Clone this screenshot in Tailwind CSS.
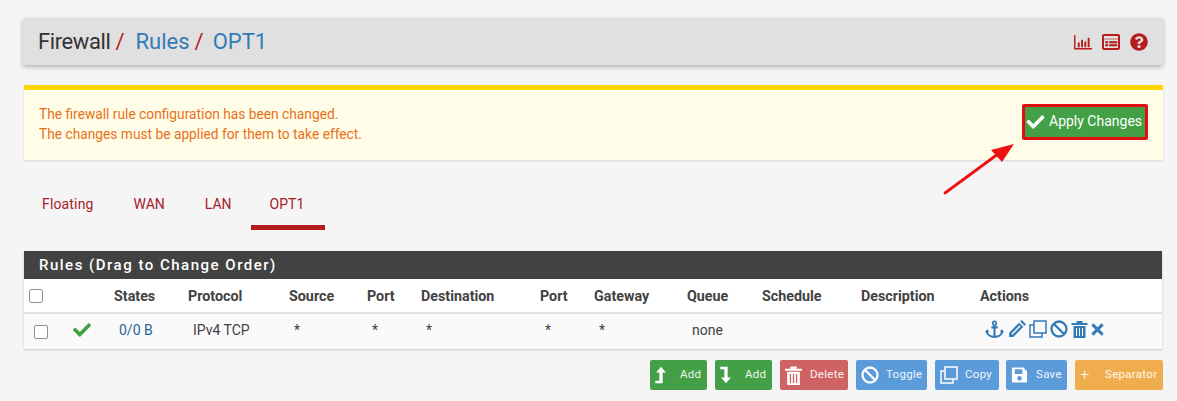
<!doctype html>
<html><head><meta charset="utf-8"><script src="https://cdn.jsdelivr.net/npm/@tailwindcss/browser@4"></script></head>
<body class="relative m-0 h-[401px] w-[1177px] overflow-hidden bg-[#f5f5f5] font-['Roboto',sans-serif] text-[#424242]">
<div class="flex flex-col pl-[24px] pr-[14px] pt-[18px]">
  <header class="-ml-[1px] flex h-[47px] items-center justify-between rounded-[2px] bg-[#e0e0e0] pl-[15px] pr-[15px] shadow-[0_2px_5px_rgba(0,0,0,0.28)]">
    <h1 class="flex items-center text-[22px] leading-none text-[#333]">
      <span class="tracking-[-0.4px]">Firewall</span><span class="ml-[5px] text-[#b71c1c]">/</span>
      <span class="ml-[11px] text-[#337ab7]">Rules</span><span class="ml-[5px] text-[#b71c1c]">/</span>
      <span class="ml-[9px] text-[#337ab7]">OPT1</span>
    </h1>
    <div class="flex items-center gap-[10px] text-[#b71c1c]">
      <svg viewBox="0 0 19 17" class="h-[16px] w-[18px]" fill="currentColor"><path d="M0 1h1.500v14H19v1.500H0zM4 9h2v5H4zM7.500 6h2v8h-2zM11 8h2v6h-2zM14.500 4h2v10h-2z"/></svg>
      <svg viewBox="0 0 18 16" class="h-[16px] w-[18px]"><rect x="1" y="1" width="16" height="14" rx="1" fill="none" stroke="currentColor" stroke-width="2"/><path d="M1 5h16M3.500 7.500h2.500v1.500H3.500zM7.500 7.500H15v1.500H7.500zM3.500 10.500h2.500V12H3.500zM7.500 10.500H15V12H7.500z" fill="currentColor" stroke="currentColor" stroke-width=".6"/></svg>
      <svg viewBox="0 0 512 512" class="h-[18px] w-[18px]" fill="currentColor"><path d="M504 256c0 136.997-111.043 248-248 248S8 392.997 8 256C8 119.083 119.043 8 256 8s248 111.083 248 248zM262.655 90c-54.497 0-89.255 22.957-116.549 63.758-3.536 5.286-2.353 12.415 2.715 16.258l34.699 26.31c5.205 3.947 12.621 3.008 16.665-2.122 17.864-22.658 30.113-35.797 57.303-35.797 20.429 0 45.698 13.148 45.698 32.958 0 14.976-12.363 22.667-32.534 33.976C247.128 238.528 216 254.941 216 296v4c0 6.627 5.373 12 12 12h56c6.627 0 12-5.373 12-12v-1.333c0-28.462 83.186-29.647 83.186-106.667 0-58.002-60.165-102-116.531-102zM256 338c-25.365 0-46 20.635-46 46 0 25.364 20.635 46 46 46s46-20.636 46-46c0-25.365-20.635-46-46-46z"/></svg>
    </div>
  </header>

  <section class="mt-[20px] flex h-[75px] items-center justify-between border-t-[5px] border-[#ffd600] bg-[#fffde7] pl-[15px] pr-[15px] shadow-[0_1px_2px_rgba(0,0,0,0.12)]">
    <p class="mb-[3px] text-[13.75px] leading-[20px] text-[#e8701a]">The firewall rule configuration has been changed.<br>The changes must be applied for them to take effect.</p>
    <button class="mb-[7px] flex h-[36px] w-[126px] items-center rounded-[2px] border-[3px] border-[#df0f0f] bg-[#43a047] pl-[1px] text-[14px] text-white">
      <svg viewBox="0 0 512 512" class="mr-[4px] h-[18px] w-[19px]" fill="currentColor"><path d="M173.898 439.404l-166.4-166.4c-9.997-9.997-9.997-26.206 0-36.204l36.203-36.204c9.997-9.998 26.207-9.998 36.204 0L192 312.69 432.095 72.596c9.997-9.997 26.207-9.997 36.204 0l36.203 36.204c9.997 9.997 9.997 26.206 0 36.204l-294.4 294.401c-9.998 9.997-26.207 9.997-36.204-.001z"/></svg>
      Apply Changes
    </button>
  </section>

  <nav class="mt-[24px] flex h-[46px] text-[14px] text-[#a3212a]">
    <a class="-ml-[2px] h-full px-[20px] pt-[10px] tracking-[0.15px]">Floating</a>
    <a class="h-full px-[20px] pt-[10px]">WAN</a>
    <a class="h-full px-[20px] pt-[10px]">LAN</a>
    <a class="-ml-[1px] h-full border-b-[5px] border-[#b71c1c] pl-[19px] pr-[21px] pt-[10px]">OPT1</a>
  </nav>

  <section class="mr-[1px] mt-[21px] bg-white shadow-[0_1px_2px_rgba(0,0,0,0.2)]">
    <h2 class="flex h-[28px] items-center bg-[#424242] pl-[15px] text-[15px] font-medium tracking-[1.5px] text-white">Rules (Drag to Change Order)</h2>
    <div class="grid h-[35px] grid-cols-[44px_41px_74px_101px_78px_54px_119px_54px_93px_75px_99px_119px_1fr] items-center border-b-[2px] border-[#e0e0e0] pl-[5px] pt-[2px] text-[14.3px] font-bold text-[#424242]">
      <span class="-mt-[2px] h-[14px] w-[14px] rounded-[2px] border border-[#8f8f8f] bg-white"></span><span></span>
      <span>States</span><span>Protocol</span><span>Source</span><span>Port</span><span>Destination</span><span>Port</span><span>Gateway</span><span>Queue</span><span>Schedule</span><span>Description</span><span>Actions</span>
    </div>
    <div class="grid h-[35px] grid-cols-[44px_41px_74px_101px_78px_54px_119px_54px_93px_75px_99px_119px_1fr] items-center bg-[#fafafa] pb-[2px] pl-[5px] text-[14px] text-[#424242]">
      <span class="ml-[5px] mt-[2px] h-[14px] w-[14px] rounded-[2px] border border-[#8f8f8f] bg-white"></span>
      <svg viewBox="0 0 512 512" class="-mt-[2px] h-[18px] w-[18px] text-[#43a047]" fill="currentColor"><path d="M173.898 439.404l-166.4-166.4c-9.997-9.997-9.997-26.206 0-36.204l36.203-36.204c9.997-9.998 26.207-9.998 36.204 0L192 312.69 432.095 72.596c9.997-9.997 26.207-9.997 36.204 0l36.203 36.204c9.997 9.997 9.997 26.206 0 36.204l-294.4 294.401c-9.998 9.997-26.207 9.997-36.204-.001z"/></svg>
      <span class="pl-[5px] text-[#2a6496]">0/0 B</span><span class="pl-[5px]">IPv4 TCP</span><span class="pl-[5px]">*</span><span class="pl-[5px]">*</span><span class="pl-[5px]">*</span><span class="pl-[5px]">*</span><span class="pl-[5px]">*</span><span class="pl-[5px]">none</span><span></span><span></span>
      <div class="-mt-[3px] ml-[5px] flex items-center gap-[3px] text-[#337ab7]">
        <svg viewBox="0 0 18 18" class="h-[19px] w-[19px]" fill="none" stroke="currentColor"><circle cx="9" cy="3" r="1.700" stroke-width="1.500"/><path d="M9 5v11M6 7h6" stroke-width="2"/><path d="M1.500 10.500c.5 3.500 4 5.500 7.500 5.500s7-2 7.500-5.500" stroke-width="2"/><path d="M0 11.500l2-3 2 3zM14 11.500l2-3 2 3z" fill="currentColor" stroke="none"/></svg>
        <svg viewBox="0 0 18 18" class="h-[19px] w-[19px]" fill="currentColor"><path d="M11.500 2.500l4 4L6 16H2v-4zM13 1l1-1 4 4-1 1-.5.500-4-4z"/><path d="M4 13l1 1 8-8-1-1z" fill="#fafafa"/></svg>
        <svg viewBox="0 0 18 18" class="h-[18px] w-[18px]" fill="none" stroke="currentColor" stroke-width="1.500"><rect x="5" y="1" width="12" height="12"/><path d="M5 5H1v12h12v-4"/></svg>
        <svg viewBox="0 0 18 18" class="h-[18px] w-[18px]" fill="none" stroke="currentColor" stroke-width="2.300"><circle cx="9" cy="9" r="7.500"/><path d="M3.700 3.700l10.600 10.600"/></svg>
        <svg viewBox="0 0 16 18" class="h-[18px] w-[17px]" fill="currentColor"><path d="M0 3h16v2H0zM5 1h6v2H5zM2 6h12v12H2z"/><path d="M4.500 8h1v8h-1zM7.500 8h1v8h-1zM10.500 8h1v8h-1z" fill="#fafafa"/></svg>
        <svg viewBox="0 0 14 14" class="h-[13px] w-[13px]" fill="none" stroke="currentColor" stroke-width="3.200"><path d="M1.500 1.500l11 11M12.500 1.500l-11 11"/></svg>
      </div>
    </div>
  </section>

  <div class="mt-[11px] flex justify-end gap-[8px] text-[11.5px] tracking-[0.3px] text-white/90">
    <a class="flex h-[30px] w-[57px] items-center rounded-[2px] bg-[#43a047] pl-[4px]">
      <svg viewBox="0 0 16 22" class="h-[18px] w-[14px] text-white" fill="currentColor"><path d="M8 1l6 7h-4v13H1v-3h5V8H2z"/></svg><span class="ml-[12px]">Add</span></a>
    <a class="flex h-[30px] w-[57px] items-center rounded-[2px] bg-[#43a047] pl-[4px]">
      <svg viewBox="0 0 16 22" class="h-[18px] w-[14px] text-white" fill="currentColor"><path d="M1 1h9v13h4l-6 7-6-7h4V4H1z"/></svg><span class="ml-[12px]">Add</span></a>
    <a class="flex h-[30px] w-[68px] items-center rounded-[2px] bg-[#cf6262] pl-[5px]">
      <svg viewBox="0 0 16 18" class="h-[19px] w-[17px] text-white" fill="currentColor"><path d="M0 2.500h16v2H0zM5 .5h6v2H5zM2 5.500h12V18H2z"/><path d="M4.500 7.500h1.200v8.500H4.500zM7.400 7.500h1.200v8.500H7.400zM10.300 7.500h1.200v8.500h-1.200z" fill="#cf6262"/></svg><span class="ml-[8px]">Delete</span></a>
    <a class="flex h-[30px] w-[71px] items-center rounded-[2px] bg-[#5b9bd9] pl-[5px]">
      <svg viewBox="0 0 18 18" class="h-[18px] w-[18px] text-white" fill="none" stroke="currentColor" stroke-width="2.300"><circle cx="9" cy="9" r="7.500"/><path d="M3.700 3.700l10.600 10.600"/></svg><span class="ml-[7px]">Toggle</span></a>
    <a class="flex h-[30px] w-[64px] items-center rounded-[2px] bg-[#5b9bd9] pl-[5px]">
      <svg viewBox="0 0 18 18" class="h-[18px] w-[18px] text-white" fill="none" stroke="currentColor" stroke-width="1.500"><rect x="5" y="1" width="12" height="12"/><path d="M5 5H1v12h12v-4"/></svg><span class="ml-[7px]">Copy</span></a>
    <a class="-ml-[1px] flex h-[30px] w-[61px] items-center rounded-[2px] bg-[#5b9bd9] pl-[5px]">
      <svg viewBox="0 0 18 18" class="h-[18px] w-[17px] text-white" fill="currentColor"><path fill-rule="evenodd" d="M2 1h11l4 4v11a1 1 0 0 1-1 1H2a1 1 0 0 1-1-1V2a1 1 0 0 1 1-1zM4 3v5h8V3zM9 10a2.500 2.500 0 1 0 0 5 2.500 2.500 0 0 0 0-5z"/></svg><span class="ml-[8px]">Save</span></a>
    <a class="flex h-[30px] w-[88px] items-center rounded-[2px] bg-[#f0ad4e] pl-[5px]">
      <span class="flex h-[18px] w-[10px] items-center justify-center text-[16px] font-light">+</span><span class="ml-[15px]">Separator</span></a>
  </div>
</div>

<svg class="absolute left-[940px] top-[138px] h-[62px] w-[80px]" viewBox="0 0 80 62" fill="#ee1111"><path d="M5 55L58 16" stroke="#ee1111" stroke-width="2.800" stroke-linecap="round"/><path d="M74 6L62 24 51 12z"/></svg>
</body></html>
